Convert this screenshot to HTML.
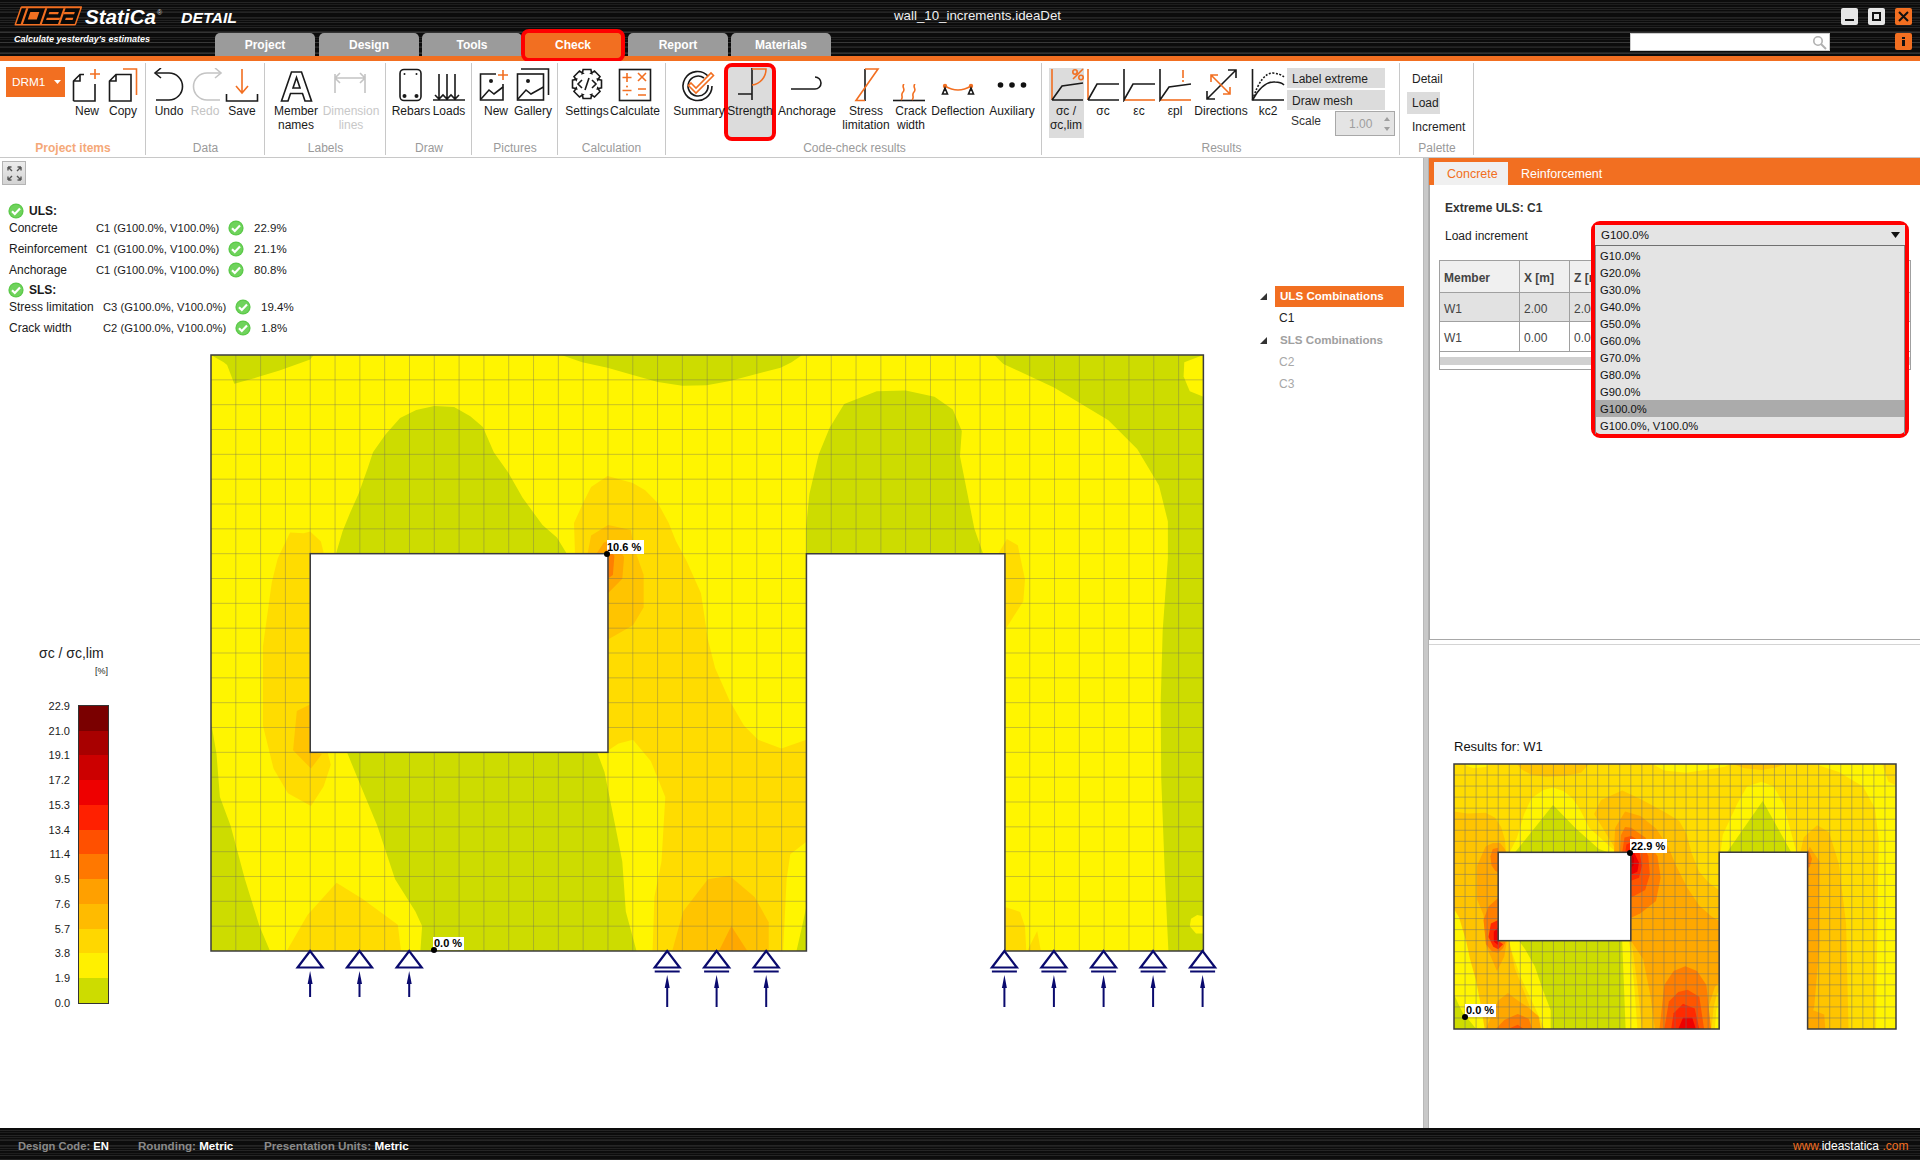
<!DOCTYPE html>
<html><head><meta charset="utf-8">
<style>
*{margin:0;padding:0;box-sizing:border-box}
html,body{width:1920px;height:1160px;overflow:hidden;background:#fff;font-family:"Liberation Sans",sans-serif;position:relative;color:#1e1e1e}
.abs{position:absolute}
.t{position:absolute;white-space:nowrap}
.dark{background-color:#0c0c0c;background-image:
 repeating-linear-gradient(180deg,rgba(255,255,255,0) 0px,rgba(255,255,255,0) 2px,rgba(255,255,255,0.10) 2px,rgba(255,255,255,0.10) 3px,rgba(255,255,255,0) 3px,rgba(255,255,255,0) 5px),
 repeating-linear-gradient(180deg,rgba(255,255,255,0) 0px,rgba(255,255,255,0) 4px,rgba(255,255,255,0.07) 4px,rgba(255,255,255,0.07) 5px,rgba(255,255,255,0) 5px,rgba(255,255,255,0) 7px),
 repeating-linear-gradient(180deg,rgba(255,255,255,0) 0px,rgba(255,255,255,0) 9px,rgba(255,255,255,0.09) 9px,rgba(255,255,255,0.09) 10px,rgba(255,255,255,0) 10px,rgba(255,255,255,0) 11px)}
.tab{position:absolute;top:33px;height:23px;background:#9b9b9b;border-radius:5px 5px 0 0;color:#fff;font-weight:bold;font-size:12px;text-align:center;line-height:24px}
.sep{position:absolute;top:63px;width:1px;height:92px;background:#c8c8c8}
.glab{position:absolute;top:141px;font-size:12px;color:#9a9a9a;text-align:center;white-space:nowrap;line-height:14px}
.bl{position:absolute;font-size:12px;color:#1a1a1a;text-align:center;white-space:nowrap;line-height:15px;transform:translateX(-50%)}
.ic{position:absolute}
.chk{position:absolute;width:15px;height:15px;border-radius:50%;background:radial-gradient(circle at 50% 40%,#7ddc5c,#4cbf3a)}
.row{position:absolute;font-size:12px;line-height:14px;white-space:nowrap;color:#1a1a1a}
.leg{position:absolute;font-size:11px;color:#1a1a1a;text-align:right;width:40px;line-height:12px}
</style></head><body>

<div class="abs dark" style="left:0;top:0;width:1920px;height:56px"></div>
<div class="abs" style="left:0;top:56px;width:1920px;height:5px;background:#f26f21"></div>
<svg class="abs" style="left:0;top:0" width="250" height="48" viewBox="0 0 250 48">
<g transform="translate(14.2,25.5) skewX(-18.9)">
<rect x="0" y="-19.3" width="61.6" height="19.3" rx="1.2" fill="#f26f21"/>
<rect x="1.6" y="-17.3" width="58.4" height="15.9" fill="#080808"/>
<rect x="6.0" y="-17.3" width="2.3" height="15.9" fill="#f26f21"/>
<rect x="25.0" y="-17.3" width="2.2" height="15.9" fill="#f26f21"/>
<rect x="43.3" y="-17.3" width="2.2" height="15.9" fill="#f26f21"/>
<rect x="11.5" y="-13.5" width="9.0" height="7.5" fill="#f26f21"/>
<rect x="30.5" y="-13.5" width="9.5" height="2.2" fill="#f26f21"/>
<rect x="30.0" y="-7.7" width="13.3" height="2.2" fill="#f26f21"/>
<rect x="45.5" y="-13.5" width="10.5" height="2.2" fill="#f26f21"/>
<rect x="49.0" y="-7.7" width="7.5" height="2.2" fill="#f26f21"/>
</g>
<text x="85" y="24" font-family="Liberation Sans" font-weight="bold" font-style="italic" font-size="20" fill="#fff" textLength="71" lengthAdjust="spacingAndGlyphs">StatiCa</text>
<text x="157" y="15" font-family="Liberation Sans" font-size="7" fill="#ccc">®</text>
<text x="181" y="23" font-family="Liberation Sans" font-weight="bold" font-style="italic" font-size="15" fill="#fff" textLength="56" lengthAdjust="spacingAndGlyphs">DETAIL</text>
<text x="14" y="42" font-family="Liberation Sans" font-weight="bold" font-style="italic" font-size="9" fill="#fff" textLength="136" lengthAdjust="spacingAndGlyphs">Calculate yesterday's estimates</text>
</svg>
<div class="t" style="left:894px;top:8px;font-size:13.3px;color:#f0f0f0;line-height:16px">wall_10_increments.ideaDet</div>
<div class="abs" style="left:1841px;top:8px;width:17px;height:17px;background:#e6e6e6;border-radius:2px"><div class="abs" style="left:4px;top:11px;width:9px;height:2px;background:#111"></div></div>
<div class="abs" style="left:1868px;top:8px;width:17px;height:17px;background:#e6e6e6;border-radius:2px"><div class="abs" style="left:4px;top:4px;width:9px;height:9px;border:2px solid #111"></div></div>
<div class="abs" style="left:1895px;top:8px;width:17px;height:17px;background:#f26f21;border-radius:2px"><svg class="abs" style="left:3px;top:3px" width="11" height="11"><path d="M1 1L10 10M10 1L1 10" stroke="#111" stroke-width="2"/></svg></div>
<div class="abs" style="left:1630px;top:33px;width:200px;height:18px;background:#fff;border:1px solid #ccc"><svg class="abs" style="left:181px;top:1px" width="16" height="16"><circle cx="6" cy="6" r="4.2" stroke="#b0b0b0" stroke-width="1.6" fill="none"/><path d="M9 9L14 14" stroke="#b0b0b0" stroke-width="2"/></svg></div>
<div class="abs" style="left:1895px;top:33px;width:17px;height:17px;background:#f26f21;border-radius:2px"><div class="abs" style="left:7px;top:4px;width:3px;height:2px;background:#111"></div><div class="abs" style="left:7px;top:7px;width:3px;height:6px;background:#111"></div></div>
<div class="tab" style="left:215px;width:100px">Project</div>
<div class="tab" style="left:319px;width:100px">Design</div>
<div class="tab" style="left:422px;width:100px">Tools</div>
<div class="tab" style="left:628px;width:100px">Report</div>
<div class="tab" style="left:731px;width:100px">Materials</div>
<div class="abs" style="left:521px;top:29px;width:104px;height:33px;border:4px solid #ff0000;border-radius:8px;background:#f26f21"></div>
<div class="tab" style="left:525px;width:96px;background:#f26f21;top:33px;height:25px;border-radius:5px">Check</div>
<div class="abs" style="left:0;top:61px;width:1920px;height:97px;background:#fff;border-bottom:1px solid #c8c8c8"></div>
<div class="sep" style="left:145px"></div>
<div class="sep" style="left:264px"></div>
<div class="sep" style="left:385px"></div>
<div class="sep" style="left:471px"></div>
<div class="sep" style="left:557px"></div>
<div class="sep" style="left:665px"></div>
<div class="sep" style="left:1041px"></div>
<div class="sep" style="left:1399px"></div>
<div class="sep" style="left:1473px"></div>
<div class="glab" style="left:13px;width:120px;color:#f5a878;font-weight:bold">Project items</div>
<div class="glab" style="left:145.5px;width:120px;color:#9a9a9a;font-weight:normal">Data</div>
<div class="glab" style="left:265.5px;width:120px;color:#9a9a9a;font-weight:normal">Labels</div>
<div class="glab" style="left:369px;width:120px;color:#9a9a9a;font-weight:normal">Draw</div>
<div class="glab" style="left:455px;width:120px;color:#9a9a9a;font-weight:normal">Pictures</div>
<div class="glab" style="left:551.5px;width:120px;color:#9a9a9a;font-weight:normal">Calculation</div>
<div class="glab" style="left:794.5px;width:120px;color:#9a9a9a;font-weight:normal">Code-check results</div>
<div class="glab" style="left:1161.5px;width:120px;color:#9a9a9a;font-weight:normal">Results</div>
<div class="glab" style="left:1377px;width:120px;color:#9a9a9a;font-weight:normal">Palette</div>
<div class="abs" style="left:6px;top:67px;width:59px;height:30px;background:#f26f21"><div class="t" style="left:6px;top:8px;font-size:11.8px;color:#fff;line-height:15px">DRM1</div><svg class="abs" style="left:48px;top:13px" width="7" height="5"><path d="M0 0H7L3.5 4Z" fill="#fff"/></svg></div>
<div class="abs" style="left:724px;top:63px;width:52px;height:78px;border:4px solid #ff0000;border-radius:8px;background:#dcdcdc"></div>
<div class="abs" style="left:1049px;top:68px;width:35px;height:70px;background:#dcdcdc"></div>
<div class="bl" style="left:87px;top:104px;color:#1a1a1a">New</div>
<div class="bl" style="left:123px;top:104px;color:#1a1a1a">Copy</div>
<div class="bl" style="left:169px;top:104px;color:#1a1a1a">Undo</div>
<div class="bl" style="left:205px;top:104px;color:#c4c4c4">Redo</div>
<div class="bl" style="left:242px;top:104px;color:#1a1a1a">Save</div>
<div class="bl" style="left:411px;top:104px;color:#1a1a1a">Rebars</div>
<div class="bl" style="left:449px;top:104px;color:#1a1a1a">Loads</div>
<div class="bl" style="left:496px;top:104px;color:#1a1a1a">New</div>
<div class="bl" style="left:533px;top:104px;color:#1a1a1a">Gallery</div>
<div class="bl" style="left:587px;top:104px;color:#1a1a1a">Settings</div>
<div class="bl" style="left:635px;top:104px;color:#1a1a1a">Calculate</div>
<div class="bl" style="left:699px;top:104px;color:#1a1a1a">Summary</div>
<div class="bl" style="left:750px;top:104px;color:#1a1a1a">Strength</div>
<div class="bl" style="left:807px;top:104px;color:#1a1a1a">Anchorage</div>
<div class="bl" style="left:958px;top:104px;color:#1a1a1a">Deflection</div>
<div class="bl" style="left:1012px;top:104px;color:#1a1a1a">Auxiliary</div>
<div class="bl" style="left:1103px;top:104px;color:#1a1a1a">σc</div>
<div class="bl" style="left:1139px;top:104px;color:#1a1a1a">εc</div>
<div class="bl" style="left:1175px;top:104px;color:#1a1a1a">εpl</div>
<div class="bl" style="left:1221px;top:104px;color:#1a1a1a">Directions</div>
<div class="bl" style="left:1268px;top:104px;color:#1a1a1a">kc2</div>
<div class="bl" style="left:296px;top:104px;color:#1a1a1a">Member</div>
<div class="bl" style="left:296px;top:118px;color:#1a1a1a">names</div>
<div class="bl" style="left:351px;top:104px;color:#c8c8c8">Dimension</div>
<div class="bl" style="left:351px;top:118px;color:#c8c8c8">lines</div>
<div class="bl" style="left:866px;top:104px;color:#1a1a1a">Stress</div>
<div class="bl" style="left:866px;top:118px;color:#1a1a1a">limitation</div>
<div class="bl" style="left:911px;top:104px;color:#1a1a1a">Crack</div>
<div class="bl" style="left:911px;top:118px;color:#1a1a1a">width</div>
<div class="bl" style="left:1066px;top:104px;color:#1a1a1a">σc /</div>
<div class="bl" style="left:1066px;top:118px;color:#1a1a1a">σc,lim</div>
<svg class="ic" style="left:72px;top:68px" width="32" height="34" viewBox="0 0 32 34"><path d="M1.5 33V13L8 6.5H12M1.5 13H8V6.5" stroke="#1a1a1a" stroke-width="1.6" fill="none"/><path d="M23 16V33H1.5" stroke="#1a1a1a" stroke-width="1.6" fill="none"/><path d="M23 1V11M18 6H28" stroke="#f26f21" stroke-width="1.6" fill="none"/></svg>
<svg class="ic" style="left:108px;top:68px" width="32" height="34" viewBox="0 0 32 34"><path d="M1.5 33V13L8 6.5H23V33Z M1.5 13H8V6.5" stroke="#1a1a1a" stroke-width="1.6" fill="none"/><path d="M15 1H28.5V27" stroke="#f26f21" stroke-width="1.6" fill="none"/></svg>
<svg class="ic" style="left:153px;top:68px" width="34" height="34" viewBox="0 0 34 34"><path d="M3 5H16A13 13 0 0 1 16 32H3" stroke="#1a1a1a" stroke-width="1.6" fill="none"/><path d="M8 0L2 5L8 10" stroke="#1a1a1a" stroke-width="1.6" fill="none"/></svg>
<svg class="ic" style="left:189px;top:68px" width="34" height="34" viewBox="0 0 34 34"><path d="M31 5H18A13 13 0 0 0 18 32H31" stroke="#c4c4c4" stroke-width="1.6" fill="none"/><path d="M26 0L32 5L26 10" stroke="#c4c4c4" stroke-width="1.6" fill="none"/></svg>
<svg class="ic" style="left:225px;top:68px" width="34" height="34" viewBox="0 0 34 34"><path d="M17 1V25M11 18L17 25L23 18" stroke="#f26f21" stroke-width="1.6" fill="none"/><path d="M1.5 26V33H32.5V26" stroke="#1a1a1a" stroke-width="1.6" fill="none"/></svg>
<svg class="ic" style="left:280px;top:70px" width="34" height="34" viewBox="0 0 34 34"><path d="M11.5 2H21.5L31.5 31H25L22.5 23.5H10.5L8 31H1.5Z M13 18H20L16.5 7.5Z" stroke="#1a1a1a" stroke-width="1.6" fill="none"/></svg>
<svg class="ic" style="left:333px;top:68px" width="34" height="34" viewBox="0 0 34 34"><path d="M2 6V25M32 6V25M2 10H32M7 5L2 10L7 15M27 5L32 10L27 15" stroke="#c4c4c4" stroke-width="1.6" fill="none"/></svg>
<svg class="ic" style="left:398px;top:68px" width="26" height="34" viewBox="0 0 26 34"><rect x="2" y="1.5" width="21" height="31" rx="4" stroke="#1a1a1a" stroke-width="1.6" fill="none"/><circle cx="6.5" cy="6" r="1" fill="#1a1a1a"/><circle cx="18.5" cy="6" r="1" fill="#1a1a1a"/><circle cx="6.5" cy="28" r="2" fill="#1a1a1a"/><circle cx="18.5" cy="28" r="2" fill="#1a1a1a"/></svg>
<svg class="ic" style="left:432px;top:68px" width="34" height="34" viewBox="0 0 34 34"><path d="M7 6V31M15 6V31M23 6V31M1 32H33M3 27L7 31L11 27L15 31L19 27L23 31L27 27" stroke="#1a1a1a" stroke-width="1.6" fill="none"/></svg>
<svg class="ic" style="left:479px;top:68px" width="34" height="34" viewBox="0 0 34 34"><path d="M24 16V32H1.5V6H17" stroke="#1a1a1a" stroke-width="1.6" fill="none"/><path d="M24 2V12M19 7H29" stroke="#f26f21" stroke-width="1.6" fill="none"/><circle cx="12" cy="13" r="2" fill="#1a1a1a"/><path d="M2 31L10 22L15 26L24 19" stroke="#1a1a1a" stroke-width="1.6" fill="none"/></svg>
<svg class="ic" style="left:516px;top:68px" width="34" height="34" viewBox="0 0 34 34"><rect x="1.5" y="6" width="26" height="26" stroke="#1a1a1a" stroke-width="1.6" fill="none"/><path d="M5 1H32.5V27" stroke="#1a1a1a" stroke-width="1.6" fill="none"/><circle cx="12" cy="13" r="2" fill="#1a1a1a"/><path d="M2 31L10 22L15 26L27.5 19" stroke="#1a1a1a" stroke-width="1.6" fill="none"/></svg>
<svg class="ic" style="left:571px;top:68px" width="32" height="34" viewBox="0 0 32 34"><path d="M30.5 12.1 L30.5 19.9 L26.5 20.7 L26.7 20.1 L29.0 23.5 L23.5 29.0 L20.1 26.7 L20.7 26.5 L19.9 30.5 L12.1 30.5 L11.3 26.5 L11.9 26.7 L8.5 29.0 L3.0 23.5 L5.3 20.1 L5.5 20.7 L1.5 19.9 L1.5 12.1 L5.5 11.3 L5.3 11.9 L3.0 8.5 L8.5 3.0 L11.9 5.3 L11.3 5.5 L12.1 1.5 L19.9 1.5 L20.7 5.5 L20.1 5.3 L23.5 3.0 L29.0 8.5 L26.7 11.9 L26.5 11.3Z" stroke="#1a1a1a" stroke-width="1.6" fill="none" stroke-width="1.4"/><path d="M11 12L7 16L11 20M21 12L25 16L21 20M18 10L14 22" stroke="#1a1a1a" stroke-width="1.6" fill="none" stroke-width="1.4"/></svg>
<svg class="ic" style="left:618px;top:68px" width="34" height="34" viewBox="0 0 34 34"><rect x="1.5" y="1.5" width="31" height="31" stroke="#1a1a1a" stroke-width="1.6" fill="none"/><path d="M9 5V14M4.5 9.5H13.5M20 5L28 13M28 5L20 13M4.5 22.5H13.5M20 21H28M20 27H28" stroke="#f26f21" stroke-width="1.6" fill="none"/><circle cx="9" cy="18.5" r="1" fill="#f26f21"/><circle cx="9" cy="26.5" r="1" fill="#f26f21"/></svg>
<svg class="ic" style="left:682px;top:68px" width="34" height="34" viewBox="0 0 34 34"><path d="M26 8A14.5 14.5 0 1 0 30 18" stroke="#1a1a1a" stroke-width="1.6" fill="none" stroke-width="1.5"/><path d="M22 10A10 10 0 1 0 26 17" stroke="#1a1a1a" stroke-width="1.6" fill="none" stroke-width="1.5"/><path d="M9 15L14 20L29 5L31.5 7.5L14 25L6.5 17.5Z" stroke="#f26f21" stroke-width="1.6" fill="none" stroke-width="1.4"/></svg>
<svg class="ic" style="left:738px;top:68px" width="34" height="34" viewBox="0 0 34 34"><path d="M14 0V32M0 26H14" stroke="#1a1a1a" stroke-width="1.6" fill="none"/><path d="M14 1H28A16 16 0 0 1 14 17" stroke="#f26f21" stroke-width="1.6" fill="none"/></svg>
<svg class="ic" style="left:790px;top:76px" width="34" height="16" viewBox="0 0 34 16"><path d="M1 13H25A6 6 0 0 0 25 1" stroke="#1a1a1a" stroke-width="1.6" fill="none"/></svg>
<svg class="ic" style="left:854px;top:68px" width="28" height="34" viewBox="0 0 28 34"><path d="M11 1V33" stroke="#1a1a1a" stroke-width="1.6" fill="none"/><path d="M11 1H24L2 32.5H11" stroke="#f26f21" stroke-width="1.6" fill="none"/></svg>
<svg class="ic" style="left:893px;top:84px" width="34" height="18" viewBox="0 0 34 18"><path d="M0 16.5H32" stroke="#1a1a1a" stroke-width="1.6" fill="none"/><path d="M11 0C8 3 13 5 10 8S11 13 8 16M22 0C19 3 24 5 21 8S22 13 19 16" stroke="#f26f21" stroke-width="1.6" fill="none" stroke-width="1.3"/></svg>
<svg class="ic" style="left:940px;top:82px" width="36" height="16" viewBox="0 0 36 16"><path d="M5 4Q18 12 31 4" stroke="#f26f21" stroke-width="1.6" fill="none"/><circle cx="5" cy="4" r="2.2" fill="#f26f21"/><circle cx="31" cy="4" r="2.2" fill="#f26f21"/><path d="M5 6L2.5 12H7.5Z M31 6L28.5 12H33.5Z" stroke="#1a1a1a" stroke-width="1.6" fill="none" stroke-width="1.3"/></svg>
<svg class="ic" style="left:995px;top:80px" width="36" height="10" viewBox="0 0 36 10"><circle cx="5.5" cy="5" r="2.8" fill="#111"/><circle cx="17" cy="5" r="2.8" fill="#111"/><circle cx="28.5" cy="5" r="2.8" fill="#111"/></svg>
<svg class="ic" style="left:1050px;top:68px" width="34" height="34" viewBox="0 0 34 34"><path d="M2 1V32" stroke="#f26f21" stroke-width="1.6" fill="none"/><path d="M2 32H33M2 32L12 18L33 15" stroke="#1a1a1a" stroke-width="1.6" fill="none"/><path d="M23 11L33 1" stroke="#f26f21" stroke-width="1.6" fill="none" stroke-width="1.5"/><circle cx="25" cy="4" r="2.2" stroke="#f26f21" stroke-width="1.6" fill="none" stroke-width="1.4"/><circle cx="31" cy="9.5" r="2.2" stroke="#f26f21" stroke-width="1.6" fill="none" stroke-width="1.4"/></svg>
<svg class="ic" style="left:1086px;top:68px" width="34" height="34" viewBox="0 0 34 34"><path d="M2 1V32" stroke="#f26f21" stroke-width="1.6" fill="none"/><path d="M2 32H33M2 32L11 16H33" stroke="#1a1a1a" stroke-width="1.6" fill="none"/></svg>
<svg class="ic" style="left:1122px;top:68px" width="34" height="34" viewBox="0 0 34 34"><path d="M2 32H33" stroke="#f26f21" stroke-width="1.6" fill="none"/><path d="M2 1V32L11 16H33" stroke="#1a1a1a" stroke-width="1.6" fill="none"/></svg>
<svg class="ic" style="left:1158px;top:68px" width="34" height="34" viewBox="0 0 34 34"><path d="M2 32H33" stroke="#f26f21" stroke-width="1.6" fill="none"/><path d="M2 1V32L11 19L33 16" stroke="#1a1a1a" stroke-width="1.6" fill="none"/><path d="M25 2V10M25 12V14" stroke="#f26f21" stroke-width="1.6" fill="none"/></svg>
<svg class="ic" style="left:1204px;top:68px" width="34" height="34" viewBox="0 0 34 34"><path d="M3 31L32 2M24 2H32V10M3 23V31H11" stroke="#1a1a1a" stroke-width="1.6" fill="none"/><path d="M7 7L26 26M7 14V7H14M19 26H26V19" stroke="#f26f21" stroke-width="1.6" fill="none"/></svg>
<svg class="ic" style="left:1251px;top:68px" width="34" height="34" viewBox="0 0 34 34"><path d="M1.5 1V32H33" stroke="#1a1a1a" stroke-width="1.6" fill="none"/><path d="M1.5 32Q12 13 24 14Q30 14 33 17" stroke="#1a1a1a" stroke-width="1.6" fill="none"/><path d="M1.5 32Q10 5 22 5Q30 6 33 9" stroke="#1a1a1a" stroke-width="1.6" fill="none" stroke-dasharray="2 1.5"/></svg>
<div class="abs" style="left:1287px;top:68px;width:98px;height:20px;background:#dcdcdc"></div>
<div class="abs" style="left:1287px;top:90px;width:98px;height:20px;background:#dcdcdc"></div>
<div class="t" style="left:1292px;top:72px;font-size:12px;line-height:14px">Label extreme</div>
<div class="t" style="left:1292px;top:94px;font-size:12px;line-height:14px">Draw mesh</div>
<div class="t" style="left:1291px;top:114px;font-size:12px;line-height:14px;color:#333">Scale</div>
<div class="abs" style="left:1335px;top:111px;width:60px;height:25px;background:#e4e4e4;border:1px solid #a8a8a8"><div class="t" style="left:13px;top:5px;font-size:12px;color:#9e9e9e;line-height:14px">1.00</div><svg class="abs" style="left:47px;top:4px" width="8" height="16"><path d="M1 5H7L4 1Z M1 11H7L4 15Z" fill="#9e9e9e"/></svg></div>
<div class="t" style="left:1412px;top:72px;font-size:12px;line-height:14px">Detail</div>
<div class="abs" style="left:1407px;top:92px;width:33px;height:22px;background:#dcdcdc"></div>
<div class="t" style="left:1412px;top:96px;font-size:12px;line-height:14px">Load</div>
<div class="t" style="left:1412px;top:120px;font-size:12px;line-height:14px">Increment</div>
<div class="abs" style="left:2px;top:161px;width:24px;height:24px;border:1px solid #b4b4b4;background:linear-gradient(#ececec,#d4d4d4)"><svg class="abs" style="left:3px;top:3px" width="17" height="17"><path d="M2 2L6 6M2 2V5.5M2 2H5.5M15 2L11 6M15 2V5.5M15 2H11.5M2 15L6 11M2 15V11.5M2 15H5.5M15 15L11 11M15 15V11.5M15 15H11.5" stroke="#555" stroke-width="1.4" fill="none"/></svg></div>
<svg class="abs" style="left:8px;top:203px" width="16" height="16" viewBox="0 0 16 16"><circle cx="8" cy="8" r="7.6" fill="#5cc94a"/><circle cx="8" cy="8" r="6.3" fill="#6fd35c"/><path d="M4 8.2L6.8 11L12 5.6" stroke="#fff" stroke-width="2.2" fill="none"/></svg>
<div class="row" style="left:29px;top:204px;font-weight:bold">ULS:</div>
<svg class="abs" style="left:8px;top:282px" width="16" height="16" viewBox="0 0 16 16"><circle cx="8" cy="8" r="7.6" fill="#5cc94a"/><circle cx="8" cy="8" r="6.3" fill="#6fd35c"/><path d="M4 8.2L6.8 11L12 5.6" stroke="#fff" stroke-width="2.2" fill="none"/></svg>
<div class="row" style="left:29px;top:283px;font-weight:bold">SLS:</div>
<div class="row" style="left:9px;top:221px">Concrete</div>
<div class="row" style="left:96px;top:221px;font-size:11.2px">C1 (G100.0%, V100.0%)</div>
<svg class="abs" style="left:228px;top:220px" width="16" height="16" viewBox="0 0 16 16"><circle cx="8" cy="8" r="7.6" fill="#5cc94a"/><circle cx="8" cy="8" r="6.3" fill="#6fd35c"/><path d="M4 8.2L6.8 11L12 5.6" stroke="#fff" stroke-width="2.2" fill="none"/></svg>
<div class="row" style="left:254px;top:221px;font-size:11.5px">22.9%</div>
<div class="row" style="left:9px;top:242px">Reinforcement</div>
<div class="row" style="left:96px;top:242px;font-size:11.2px">C1 (G100.0%, V100.0%)</div>
<svg class="abs" style="left:228px;top:241px" width="16" height="16" viewBox="0 0 16 16"><circle cx="8" cy="8" r="7.6" fill="#5cc94a"/><circle cx="8" cy="8" r="6.3" fill="#6fd35c"/><path d="M4 8.2L6.8 11L12 5.6" stroke="#fff" stroke-width="2.2" fill="none"/></svg>
<div class="row" style="left:254px;top:242px;font-size:11.5px">21.1%</div>
<div class="row" style="left:9px;top:263px">Anchorage</div>
<div class="row" style="left:96px;top:263px;font-size:11.2px">C1 (G100.0%, V100.0%)</div>
<svg class="abs" style="left:228px;top:262px" width="16" height="16" viewBox="0 0 16 16"><circle cx="8" cy="8" r="7.6" fill="#5cc94a"/><circle cx="8" cy="8" r="6.3" fill="#6fd35c"/><path d="M4 8.2L6.8 11L12 5.6" stroke="#fff" stroke-width="2.2" fill="none"/></svg>
<div class="row" style="left:254px;top:263px;font-size:11.5px">80.8%</div>
<div class="row" style="left:9px;top:300px">Stress limitation</div>
<div class="row" style="left:103px;top:300px;font-size:11.2px">C3 (G100.0%, V100.0%)</div>
<svg class="abs" style="left:235px;top:299px" width="16" height="16" viewBox="0 0 16 16"><circle cx="8" cy="8" r="7.6" fill="#5cc94a"/><circle cx="8" cy="8" r="6.3" fill="#6fd35c"/><path d="M4 8.2L6.8 11L12 5.6" stroke="#fff" stroke-width="2.2" fill="none"/></svg>
<div class="row" style="left:261px;top:300px;font-size:11.5px">19.4%</div>
<div class="row" style="left:9px;top:321px">Crack width</div>
<div class="row" style="left:103px;top:321px;font-size:11.2px">C2 (G100.0%, V100.0%)</div>
<svg class="abs" style="left:235px;top:320px" width="16" height="16" viewBox="0 0 16 16"><circle cx="8" cy="8" r="7.6" fill="#5cc94a"/><circle cx="8" cy="8" r="6.3" fill="#6fd35c"/><path d="M4 8.2L6.8 11L12 5.6" stroke="#fff" stroke-width="2.2" fill="none"/></svg>
<div class="row" style="left:261px;top:321px;font-size:11.5px">1.8%</div>
<div class="t" style="left:39px;top:645px;font-size:14px;line-height:16px;color:#222">σc / σc,lim</div>
<div class="t" style="left:95px;top:666px;font-size:9px;line-height:10px;color:#222">[%]</div>
<div class="abs" style="left:78px;top:705px;width:31px;height:299px;border:1px solid #333"></div>
<div class="abs" style="left:79px;top:706.0px;width:29px;height:25.2px;background:#7a0000"></div>
<div class="abs" style="left:79px;top:730.7px;width:29px;height:25.2px;background:#a80000"></div>
<div class="abs" style="left:79px;top:755.4px;width:29px;height:25.2px;background:#cc0000"></div>
<div class="abs" style="left:79px;top:780.2px;width:29px;height:25.2px;background:#ee0000"></div>
<div class="abs" style="left:79px;top:804.9px;width:29px;height:25.2px;background:#ff2000"></div>
<div class="abs" style="left:79px;top:829.6px;width:29px;height:25.2px;background:#ff5000"></div>
<div class="abs" style="left:79px;top:854.3px;width:29px;height:25.2px;background:#ff7800"></div>
<div class="abs" style="left:79px;top:879.0px;width:29px;height:25.2px;background:#ffa000"></div>
<div class="abs" style="left:79px;top:903.8px;width:29px;height:25.2px;background:#ffbb00"></div>
<div class="abs" style="left:79px;top:928.5px;width:29px;height:25.2px;background:#ffd700"></div>
<div class="abs" style="left:79px;top:953.2px;width:29px;height:25.2px;background:#fff000"></div>
<div class="abs" style="left:79px;top:977.9px;width:29px;height:25.2px;background:#cddc00"></div>
<div class="leg" style="left:30px;top:700.0px">22.9</div>
<div class="leg" style="left:30px;top:724.7px">21.0</div>
<div class="leg" style="left:30px;top:749.4px">19.1</div>
<div class="leg" style="left:30px;top:774.2px">17.2</div>
<div class="leg" style="left:30px;top:798.9px">15.3</div>
<div class="leg" style="left:30px;top:823.6px">13.4</div>
<div class="leg" style="left:30px;top:848.3px">11.4</div>
<div class="leg" style="left:30px;top:873.0px">9.5</div>
<div class="leg" style="left:30px;top:897.8px">7.6</div>
<div class="leg" style="left:30px;top:922.5px">5.7</div>
<div class="leg" style="left:30px;top:947.2px">3.8</div>
<div class="leg" style="left:30px;top:971.9px">1.9</div>
<div class="leg" style="left:30px;top:996.6px">0.0</div>
<svg class="abs" style="left:207.8px;top:352px" width="998.4" height="602" viewBox="-3 -3 998.4 602">
<polygon points="0.0,0.0 992.4,0.0 992.4,596.0 0.0,596.0" fill="#fff500"/>
<polygon points="0.0,0.0 12.7,7.2 16.1,9.9 23.3,28.8 48.6,21.6 68.5,15.4 99.2,4.5 102.7,0.0" fill="#cddc00"/>
<polygon points="350.3,0.0 371.2,7.2 396.5,12.7 421.8,19.9 446.8,27.1 471.4,30.8 495.7,30.3 519.0,26.1 545.3,18.9 569.6,12.7 580.6,7.2 591.2,0.0" fill="#cddc00"/>
<polygon points="125.0,198.7 131.5,176.6 138.7,158.7 147.6,138.8 156.6,113.5 162.0,97.3 174.7,79.2 189.1,63.1 205.2,54.9 223.3,50.9 243.1,52.1 259.3,61.3 271.9,72.0 282.8,97.3 297.2,117.5 311.6,142.8 331.5,169.9 345.9,182.5 355.8,198.7" fill="#cddc00"/>
<polygon points="594.9,198.7 594.9,173.8 598.4,139.1 600.4,130.4 607.8,99.3 618.8,72.5 633.2,48.9 665.7,36.3 694.7,35.5 723.5,41.7 741.8,54.4 750.8,76.0 749.0,101.3 756.2,137.6 763.4,173.8 772.3,199.2" fill="#cddc00"/>
<polygon points="783.3,0.0 792.4,8.9 843.0,32.5 897.4,65.3 926.2,94.1 948.0,130.4 956.9,166.6 956.9,202.9 951.7,275.2 949.7,347.7 950.2,422.2 953.9,521.5 957.4,596.0 992.4,596.0 992.4,0.0" fill="#cddc00"/>
<polygon points="973.3,7.2 992.4,0.0 992.4,41.7 978.8,36.3 972.6,21.6" fill="#fff500"/>
<polygon points="980.0,563.7 986.2,560.0 992.4,561.2 992.4,578.6 985.0,578.6 978.8,571.2" fill="#fff500"/>
<polygon points="0.0,366.8 5.5,399.1 8.9,442.0 19.6,470.8 34.0,524.5 48.4,570.9 59.0,596.0 0.0,596.0" fill="#cddc00"/>
<polygon points="136.0,397.3 148.4,427.6 166.2,470.6 184.1,524.2 204.4,556.5 211.1,570.9 209.4,596.0 425.5,596.0 414.8,556.5 411.3,506.4 404.2,470.6 393.5,417.0 385.5,395.6" fill="#cddc00"/>
<polygon points="585.5,596.0 595.4,596.0 595.4,551.3 591.7,568.7" fill="#cddc00"/>
<polygon points="112.6,197.4 109.9,186.5 99.2,176.6 92.8,178.3 79.1,177.6 66.7,203.6 60.8,227.2 51.9,291.8 51.9,370.5 62.5,413.5 76.9,438.3 100.0,451.0 112.6,431.4 119.8,409.8 116.1,395.3 111.6,397.3 111.6,198.7" fill="#ffdc00"/>
<polygon points="364.0,198.7 363.0,167.9 372.9,146.3 380.1,131.9 396.5,120.9 421.8,128.1 434.2,135.3 446.8,148.0 457.7,167.9 464.9,186.0 475.6,205.9 490.0,238.2 496.9,284.6 504.1,313.1 518.5,345.4 532.9,370.5 547.1,384.7 570.4,393.6 595.4,384.7 595.4,486.7 579.3,499.2 575.6,524.2 572.1,596.0 441.6,596.0 443.4,542.1 450.5,506.4 454.3,442.0 439.9,406.3 422.0,384.7 407.6,388.4 397.0,395.6 397.0,198.7" fill="#ffdc00"/>
<polygon points="75.7,596.0 96.5,560.0 125.5,527.7 151.3,543.8 186.8,569.7 190.0,596.0" fill="#ffdc00"/>
<polygon points="787.0,199.2 795.9,184.0 806.8,190.2 814.0,224.5 812.3,246.3 793.9,275.2" fill="#ffdc00"/>
<polygon points="793.9,552.0 801.9,554.5 809.1,557.0 814.0,571.4 815.3,596.0 793.9,596.0" fill="#ffdc00"/>
<polygon points="816.2,596.0 826.2,576.1 829.9,596.0" fill="#ffdc00"/>
<polygon points="100.0,348.9 85.8,356.1 82.1,395.3 100.0,413.5 110.9,399.1 100.0,397.3" fill="#ffc400"/>
<polygon points="376.6,198.7 380.1,180.5 397.2,169.9 419.8,175.1 421.8,186.0 425.2,198.7 432.7,220.0 432.7,252.3 422.0,270.2 397.0,284.6 397.0,198.7" fill="#ffc400"/>
<polygon points="461.2,596.0 472.1,556.5 496.9,524.2 518.5,520.8 543.6,542.1 557.7,567.2 557.7,596.0" fill="#ffc400"/>
<polygon points="385.5,198.7 392.7,187.7 397.0,186.0 406.9,191.2 413.1,202.1 411.3,223.7 397.0,238.2" fill="#ffa800"/>
<polygon points="507.9,596.0 520.3,570.9 536.4,596.0" fill="#ffa800"/>
<polygon points="393.2,198.7 397.0,192.5 403.4,201.1 401.9,220.0 397.0,223.5" fill="#ff7f00"/>
<path d="M24.81 0V596M49.62 0V596M74.43 0V596M99.24 0V596M124.05 0V596M148.86 0V596M173.67 0V596M198.48 0V596M223.29 0V596M248.10 0V596M272.91 0V596M297.72 0V596M322.53 0V596M347.34 0V596M372.15 0V596M396.96 0V596M421.77 0V596M446.58 0V596M471.39 0V596M496.20 0V596M521.01 0V596M545.82 0V596M570.63 0V596M595.44 0V596M620.25 0V596M645.06 0V596M669.87 0V596M694.68 0V596M719.49 0V596M744.30 0V596M769.11 0V596M793.92 0V596M818.73 0V596M843.54 0V596M868.35 0V596M893.16 0V596M917.97 0V596M942.78 0V596M967.59 0V596M0 24.83H992.4M0 49.67H992.4M0 74.50H992.4M0 99.33H992.4M0 124.17H992.4M0 149.00H992.4M0 173.83H992.4M0 198.67H992.4M0 223.50H992.4M0 248.33H992.4M0 273.17H992.4M0 298.00H992.4M0 322.83H992.4M0 347.67H992.4M0 372.50H992.4M0 397.33H992.4M0 422.17H992.4M0 447.00H992.4M0 471.83H992.4M0 496.67H992.4M0 521.50H992.4M0 546.33H992.4M0 571.17H992.4" stroke="rgba(100,100,100,0.36)" stroke-width="1.0" fill="none"/>
<rect x="99.24" y="198.67" width="297.72" height="198.67" fill="#fff" stroke="#3c3c3c" stroke-width="1.5"/>
<rect x="595.44" y="198.67" width="198.48" height="400.33" fill="#fff"/>
<path d="M0 0H992.4V596H793.92V198.67H595.44V596H0Z" fill="none" stroke="#3c3c3c" stroke-width="1.5"/>
</svg>
<svg class="abs" style="left:0;top:0" width="1420" height="1100">
<path d="M310.1 951L297.6 967.5H322.6Z" stroke="#0a0a6e" stroke-width="2.2" fill="none" stroke-linejoin="miter"/><path d="M310.1 981V997" stroke="#0a0a6e" stroke-width="2"/><path d="M310.1 971L307.6 984H312.6Z" fill="#0a0a6e"/>
<path d="M359.5 951L347.0 967.5H372.0Z" stroke="#0a0a6e" stroke-width="2.2" fill="none" stroke-linejoin="miter"/><path d="M359.5 981V997" stroke="#0a0a6e" stroke-width="2"/><path d="M359.5 971L357.0 984H362.0Z" fill="#0a0a6e"/>
<path d="M409.2 951L396.7 967.5H421.7Z" stroke="#0a0a6e" stroke-width="2.2" fill="none" stroke-linejoin="miter"/><path d="M409.2 981V997" stroke="#0a0a6e" stroke-width="2"/><path d="M409.2 971L406.7 984H411.7Z" fill="#0a0a6e"/>
<path d="M667.2 951L654.7 967.5H679.7Z" stroke="#0a0a6e" stroke-width="2.2" fill="none" stroke-linejoin="miter"/><path d="M654.7 971.5H679.7" stroke="#0a0a6e" stroke-width="2"/><path d="M667.2 985V1007" stroke="#0a0a6e" stroke-width="2"/><path d="M667.2 975L664.7 988H669.7Z" fill="#0a0a6e"/>
<path d="M716.6 951L704.1 967.5H729.1Z" stroke="#0a0a6e" stroke-width="2.2" fill="none" stroke-linejoin="miter"/><path d="M704.1 971.5H729.1" stroke="#0a0a6e" stroke-width="2"/><path d="M716.6 985V1007" stroke="#0a0a6e" stroke-width="2"/><path d="M716.6 975L714.1 988H719.1Z" fill="#0a0a6e"/>
<path d="M766.2 951L753.7 967.5H778.7Z" stroke="#0a0a6e" stroke-width="2.2" fill="none" stroke-linejoin="miter"/><path d="M753.7 971.5H778.7" stroke="#0a0a6e" stroke-width="2"/><path d="M766.2 985V1007" stroke="#0a0a6e" stroke-width="2"/><path d="M766.2 975L763.7 988H768.7Z" fill="#0a0a6e"/>
<path d="M1004.4 951L991.9 967.5H1016.9Z" stroke="#0a0a6e" stroke-width="2.2" fill="none" stroke-linejoin="miter"/><path d="M991.9 971.5H1016.9" stroke="#0a0a6e" stroke-width="2"/><path d="M1004.4 985V1007" stroke="#0a0a6e" stroke-width="2"/><path d="M1004.4 975L1001.9 988H1006.9Z" fill="#0a0a6e"/>
<path d="M1053.9 951L1041.4 967.5H1066.4Z" stroke="#0a0a6e" stroke-width="2.2" fill="none" stroke-linejoin="miter"/><path d="M1041.4 971.5H1066.4" stroke="#0a0a6e" stroke-width="2"/><path d="M1053.9 985V1007" stroke="#0a0a6e" stroke-width="2"/><path d="M1053.9 975L1051.4 988H1056.4Z" fill="#0a0a6e"/>
<path d="M1103.6 951L1091.1 967.5H1116.1Z" stroke="#0a0a6e" stroke-width="2.2" fill="none" stroke-linejoin="miter"/><path d="M1091.1 971.5H1116.1" stroke="#0a0a6e" stroke-width="2"/><path d="M1103.6 985V1007" stroke="#0a0a6e" stroke-width="2"/><path d="M1103.6 975L1101.1 988H1106.1Z" fill="#0a0a6e"/>
<path d="M1153.1 951L1140.6 967.5H1165.6Z" stroke="#0a0a6e" stroke-width="2.2" fill="none" stroke-linejoin="miter"/><path d="M1140.6 971.5H1165.6" stroke="#0a0a6e" stroke-width="2"/><path d="M1153.1 985V1007" stroke="#0a0a6e" stroke-width="2"/><path d="M1153.1 975L1150.6 988H1155.6Z" fill="#0a0a6e"/>
<path d="M1202.6 951L1190.1 967.5H1215.1Z" stroke="#0a0a6e" stroke-width="2.2" fill="none" stroke-linejoin="miter"/><path d="M1190.1 971.5H1215.1" stroke="#0a0a6e" stroke-width="2"/><path d="M1202.6 985V1007" stroke="#0a0a6e" stroke-width="2"/><path d="M1202.6 975L1200.1 988H1205.1Z" fill="#0a0a6e"/>
</svg>
<div class="abs" style="left:433px;top:937px;width:31px;height:13px;background:#fff"></div><div class="t" style="left:434px;top:937px;font-size:11px;font-weight:bold;line-height:13px;color:#000">0.0 %</div><div class="abs" style="left:431px;top:947px;width:6px;height:6px;border-radius:50%;background:#000"></div>
<div class="abs" style="left:607px;top:540px;width:37px;height:14px;background:#fff"></div><div class="t" style="left:607px;top:540px;font-size:11px;font-weight:bold;line-height:14px;color:#000">10.6 %</div><div class="abs" style="left:604px;top:551px;width:6px;height:6px;border-radius:50%;background:#000"></div>
<svg class="abs" style="left:1260px;top:293px" width="8" height="8"><path d="M7 0V7H0Z" fill="#333"/></svg>
<div class="abs" style="left:1275px;top:286px;width:129px;height:21px;background:#f26f21"></div>
<div class="t" style="left:1280px;top:289px;font-size:11.6px;font-weight:bold;color:#fff;line-height:14px">ULS Combinations</div>
<div class="t" style="left:1279px;top:311px;font-size:12px;line-height:14px">C1</div>
<svg class="abs" style="left:1260px;top:337px" width="8" height="8"><path d="M7 0V7H0Z" fill="#333"/></svg>
<div class="t" style="left:1280px;top:333px;font-size:11.6px;font-weight:bold;color:#a0a0a0;line-height:14px">SLS Combinations</div>
<div class="t" style="left:1279px;top:355px;font-size:12px;line-height:14px;color:#a8a8a8">C2</div>
<div class="t" style="left:1279px;top:377px;font-size:12px;line-height:14px;color:#a8a8a8">C3</div>
<div class="abs" style="left:1423px;top:158px;width:6px;height:970px;background:#c8c8c8;border-left:1px solid #b8b8b8;border-right:1px solid #b0b0b0"></div>
<div class="abs" style="left:1429px;top:158px;width:491px;height:27px;background:#f26f21"></div>
<div class="abs" style="left:1434px;top:162px;width:74px;height:23px;background:#f0f0f0"></div>
<div class="t" style="left:1447px;top:167px;font-size:12.5px;color:#f26f21;line-height:15px">Concrete</div>
<div class="t" style="left:1521px;top:167px;font-size:12.5px;color:#fff;line-height:15px">Reinforcement</div>
<div class="abs" style="left:1429px;top:185px;width:1px;height:455px;background:#a8a8a8"></div>
<div class="abs" style="left:1429px;top:639px;width:491px;height:1px;background:#a8a8a8"></div>
<div class="abs" style="left:1429px;top:644px;width:491px;height:1px;background:#d4d4d4"></div>
<div class="t" style="left:1445px;top:201px;font-size:12px;font-weight:bold;color:#333;line-height:14px">Extreme ULS: C1</div>
<div class="t" style="left:1445px;top:229px;font-size:12px;color:#222;line-height:14px">Load increment</div>
<div class="abs" style="left:1439px;top:260px;width:472px;height:110px;border:1px solid #a0a0a0;background:#fff"></div>
<div class="abs" style="left:1440px;top:261px;width:470px;height:32px;background:#f0f0f0;border-bottom:1px solid #a0a0a0"></div>
<div class="abs" style="left:1440px;top:293px;width:470px;height:29px;background:#e2e2e2;border-bottom:1px solid #a0a0a0"></div>
<div class="abs" style="left:1440px;top:322px;width:470px;height:30px;background:#fff;border-bottom:1px solid #a0a0a0"></div>
<div class="abs" style="left:1440px;top:357px;width:470px;height:8px;background:#d0d0d0"></div>
<div class="abs" style="left:1519px;top:261px;width:1px;height:91px;background:#a0a0a0"></div>
<div class="abs" style="left:1569px;top:261px;width:1px;height:91px;background:#a0a0a0"></div>
<div class="t" style="left:1444px;top:271px;font-size:12px;font-weight:bold;color:#444;line-height:14px">Member</div>
<div class="t" style="left:1524px;top:271px;font-size:12px;font-weight:bold;color:#444;line-height:14px">X [m]</div>
<div class="t" style="left:1574px;top:271px;font-size:12px;font-weight:bold;color:#444;line-height:14px">Z [m]</div>
<div class="t" style="left:1444px;top:302px;font-size:12px;color:#444;line-height:14px">W1</div>
<div class="t" style="left:1524px;top:302px;font-size:12px;color:#444;line-height:14px">2.00</div>
<div class="t" style="left:1574px;top:302px;font-size:12px;color:#444;line-height:14px">2.00</div>
<div class="t" style="left:1444px;top:331px;font-size:12px;color:#444;line-height:14px">W1</div>
<div class="t" style="left:1524px;top:331px;font-size:12px;color:#444;line-height:14px">0.00</div>
<div class="t" style="left:1574px;top:331px;font-size:12px;color:#444;line-height:14px">0.00</div>
<div class="abs" style="left:1591px;top:221px;width:318px;height:217px;border:4px solid #ff0000;border-radius:9px;background:#e4e4e4"></div>
<div class="abs" style="left:1595px;top:225px;width:310px;height:21px;background:#e4e4e4;border-bottom:1px solid #707070"></div>
<div class="t" style="left:1601px;top:228px;font-size:11.5px;color:#111;line-height:14px">G100.0%</div>
<svg class="abs" style="left:1891px;top:232px" width="10" height="7"><path d="M0 0H9L4.5 6Z" fill="#111"/></svg>
<div class="abs" style="left:1595px;top:246px;width:1px;height:188px;background:#8a8a8a"></div><div class="abs" style="left:1904px;top:246px;width:1px;height:188px;background:#8a8a8a"></div>
<div class="abs" style="left:1596px;top:400px;width:308px;height:17px;background:#ababab"></div>
<div class="t" style="left:1600px;top:249.0px;font-size:11.2px;color:#111;line-height:14px">G10.0%</div>
<div class="t" style="left:1600px;top:265.9px;font-size:11.2px;color:#111;line-height:14px">G20.0%</div>
<div class="t" style="left:1600px;top:282.9px;font-size:11.2px;color:#111;line-height:14px">G30.0%</div>
<div class="t" style="left:1600px;top:299.9px;font-size:11.2px;color:#111;line-height:14px">G40.0%</div>
<div class="t" style="left:1600px;top:316.8px;font-size:11.2px;color:#111;line-height:14px">G50.0%</div>
<div class="t" style="left:1600px;top:333.8px;font-size:11.2px;color:#111;line-height:14px">G60.0%</div>
<div class="t" style="left:1600px;top:350.7px;font-size:11.2px;color:#111;line-height:14px">G70.0%</div>
<div class="t" style="left:1600px;top:367.6px;font-size:11.2px;color:#111;line-height:14px">G80.0%</div>
<div class="t" style="left:1600px;top:384.6px;font-size:11.2px;color:#111;line-height:14px">G90.0%</div>
<div class="t" style="left:1600px;top:401.5px;font-size:11.2px;color:#111;line-height:14px">G100.0%</div>
<div class="t" style="left:1600px;top:418.5px;font-size:11.2px;color:#111;line-height:14px">G100.0%, V100.0%</div>
<div class="t" style="left:1454px;top:739px;font-size:13px;color:#111;line-height:15px">Results for: W1</div>
<svg class="abs" style="left:1451px;top:761px" width="448" height="271" viewBox="-3 -3 448 271">
<polygon points="0.0,0.0 442.0,0.0 442.0,265.0 0.0,265.0" fill="#ffdc00"/>
<polygon points="62.9,0.0 67.7,5.4 77.4,10.8 91.8,12.7 110.5,12.1 127.1,8.8 134.8,0.0" fill="#ffc400"/>
<polygon points="278.6,0.0 290.6,4.3 307.5,6.1 322.0,3.6 331.7,0.0" fill="#ffc400"/>
<polygon points="0.0,47.6 13.5,49.5 31.6,48.8 41.2,53.7 47.2,63.3 50.8,75.3 52.0,88.3 55.2,176.7 60.8,204.3 71.8,231.9 84.0,265.0 0.0,265.0" fill="#ffc400"/>
<polygon points="140.1,49.9 147.1,35.9 168.2,26.5 186.5,35.1 209.6,47.5 225.1,56.8 232.8,70.6 237.5,89.1 245.2,107.7 254.5,118.4 265.2,126.3 265.2,265.0 187.9,265.0 183.4,220.8 179.0,187.7 176.8,176.7 163.5,88.3" fill="#ffc400"/>
<polygon points="346.2,88.9 349.8,73.2 363.1,61.2 375.1,68.3 384.8,99.8 392.1,160.1 394.5,265.0 352.7,265.0 352.7,88.9" fill="#ffc400"/>
<polygon points="11.1,0.0 11.1,1.2 19.6,4.2 31.6,3.0 36.4,0.0" fill="#fff500"/>
<polygon points="198.6,0.0 210.0,6.6 232.1,8.8 254.2,5.5 270.7,2.8 276.2,0.0" fill="#fff500"/>
<polygon points="0.0,145.0 5.1,153.5 12.4,177.9 16.0,195.0 22.2,217.0 25.9,236.4 30.7,265.0 0.0,265.0" fill="#fff500"/>
<polygon points="55.7,88.3 62.9,74.1 70.2,50.0 77.4,34.3 89.4,25.9 99.0,23.5 109.9,27.2 118.3,34.3 125.2,43.9 135.4,64.0 158.7,85.1 163.4,88.6" fill="#fff500"/>
<polygon points="55.1,176.7 57.7,187.6 66.2,212.0 74.7,230.3 83.3,248.7 90.6,265.0 183.4,265.0 180.1,220.8 176.8,187.7 174.6,176.7" fill="#fff500"/>
<polygon points="266.5,88.9 268.8,70.8 283.4,39.4 293.0,22.4 307.5,17.7 319.6,22.4 329.3,39.4 342.6,88.9" fill="#fff500"/>
<polygon points="360.7,0.0 384.8,7.9 409.0,22.4 421.0,44.2 424.7,75.6 423.4,160.1 422.1,265.0 442.0,265.0 442.0,21.3 434.3,17.7 428.3,0.0" fill="#fff500"/>
<polygon points="257.5,265.0 260.8,242.9 265.2,231.9 265.2,265.0" fill="#fff500"/>
<polygon points="61.1,88.3 99.0,41.0 121.3,64.0 144.8,85.0 154.1,88.3" fill="#cddc00"/>
<polygon points="65.0,176.7 71.1,185.2 80.8,202.3 88.2,224.3 96.7,246.2 96.7,265.0 171.6,265.0 168.2,176.7" fill="#cddc00"/>
<polygon points="272.5,88.9 308.7,37.0 337.7,88.9" fill="#cddc00"/>
<polygon points="0.0,230.3 3.9,238.9 8.8,248.7 14.9,255.9 22.2,265.0 0.0,265.0" fill="#cddc00"/>
<polygon points="23.1,135.6 23.1,101.8 31.6,82.6 38.8,78.9 46.1,78.9 50.8,85.0 52.0,88.3 52.7,177.9 50.3,192.6 43.0,207.1 32.0,181.5 29.5,151.0" fill="#ffa800"/>
<polygon points="32.0,265.0 35.7,255.9 44.2,236.4 53.9,229.1 63.8,236.4 74.7,243.8 84.5,252.3 87.0,265.0" fill="#ffa800"/>
<polygon points="160.0,88.6 161.1,64.0 171.1,47.5 186.5,52.1 202.0,64.5 214.3,82.9 222.0,101.5 232.8,123.0 245.2,141.6 257.5,152.4 265.2,157.0 265.2,265.0 200.9,265.0 196.2,230.4 189.2,195.3 179.9,181.2 176.8,176.0" fill="#ffa800"/>
<polygon points="352.7,88.9 355.8,82.8 365.5,97.2 365.5,182.2 360.2,242.9 352.7,265.0" fill="#ffa800"/>
<polygon points="352.7,248.4 359.1,246.2 370.2,250.6 371.3,265.0 352.7,265.0" fill="#ffa800"/>
<polygon points="251.9,265.0 255.3,240.7 260.8,223.0 265.2,218.6 265.2,265.0" fill="#ffc400"/>
<polygon points="257.5,265.0 259.7,242.9 263.0,229.7 265.2,227.5 265.2,265.0" fill="#ffdc00"/>
<polygon points="260.8,265.0 262.4,246.2 265.2,236.3 265.2,265.0" fill="#fff500"/>
<polygon points="44.2,83.8 38.8,85.0 36.4,92.2 37.6,101.6 41.2,106.7 44.2,108.2" fill="#ff7f00"/>
<polygon points="44.2,133.9 34.5,142.5 29.5,155.9 32.0,180.3 38.1,187.6 44.2,188.8 49.1,184.0 51.5,177.9 44.2,176.7" fill="#ff7f00"/>
<polygon points="41.8,265.0 50.3,255.9 63.8,249.9 74.7,254.7 78.3,265.0" fill="#ff7f00"/>
<polygon points="165.9,88.6 167.0,71.0 171.1,62.9 177.2,63.7 191.2,73.6 203.5,92.2 206.6,113.7 202.0,136.9 186.5,149.3 176.8,153.9" fill="#ff7f00"/>
<polygon points="205.5,265.0 210.3,221.1 219.6,207.0 231.3,202.3 243.0,207.0 252.4,221.1 257.0,265.0" fill="#ff7f00"/>
<polygon points="352.7,88.9 354.7,86.1 358.0,95.0 355.8,102.7 352.7,104.9" fill="#ff7f00"/>
<polygon points="53.9,265.0 63.8,260.8 69.8,265.0" fill="#ff5500"/>
<polygon points="168.2,88.6 170.5,73.4 177.2,72.1 188.1,78.3 194.3,92.2 195.8,110.7 191.2,126.1 176.8,133.8" fill="#ff5500"/>
<polygon points="210.3,265.0 214.9,237.5 224.3,228.1 233.6,225.8 245.3,232.8 250.1,265.0" fill="#ff5500"/>
<polygon points="44.2,155.9 36.9,159.6 34.5,173.0 39.3,182.7 44.2,185.2 49.1,180.3 44.2,176.7" fill="#ff2a00"/>
<polygon points="171.3,88.6 172.4,80.6 177.2,78.3 185.0,86.0 188.1,101.5 185.0,113.7 176.8,116.8" fill="#ff2a00"/>
<polygon points="217.2,265.0 219.6,249.2 229.0,239.8 240.7,244.5 245.3,265.0" fill="#ff2a00"/>
<polygon points="44.2,163.4 39.8,167.8 39.8,177.8 44.2,181.1" fill="#ee0000"/>
<polygon points="173.5,88.3 176.8,83.9 180.3,89.1 185.0,98.4 183.4,107.7 176.8,110.7" fill="#ee0000"/>
<polygon points="224.3,265.0 229.0,253.8 238.3,253.8 241.8,265.0" fill="#ee0000"/>
<polygon points="176.8,89.4 180.1,93.9 179.6,101.6 176.8,103.8" fill="#cc0000"/>
<path d="M11.05 0V265M22.10 0V265M33.15 0V265M44.20 0V265M55.25 0V265M66.30 0V265M77.35 0V265M88.40 0V265M99.45 0V265M110.50 0V265M121.55 0V265M132.60 0V265M143.65 0V265M154.70 0V265M165.75 0V265M176.80 0V265M187.85 0V265M198.90 0V265M209.95 0V265M221.00 0V265M232.05 0V265M243.10 0V265M254.15 0V265M265.20 0V265M276.25 0V265M287.30 0V265M298.35 0V265M309.40 0V265M320.45 0V265M331.50 0V265M342.55 0V265M353.60 0V265M364.65 0V265M375.70 0V265M386.75 0V265M397.80 0V265M408.85 0V265M419.90 0V265M430.95 0V265M0 11.04H442M0 22.08H442M0 33.12H442M0 44.17H442M0 55.21H442M0 66.25H442M0 77.29H442M0 88.33H442M0 99.38H442M0 110.42H442M0 121.46H442M0 132.50H442M0 143.54H442M0 154.58H442M0 165.62H442M0 176.67H442M0 187.71H442M0 198.75H442M0 209.79H442M0 220.83H442M0 231.88H442M0 242.92H442M0 253.96H442" stroke="rgba(110,110,110,0.6)" stroke-width="0.8" fill="none"/>
<rect x="44.20" y="88.33" width="132.60" height="88.33" fill="#fff" stroke="#3c3c3c" stroke-width="1.5"/>
<rect x="265.20" y="88.33" width="88.40" height="179.67" fill="#fff"/>
<path d="M0 0H442V265H353.60V88.33H265.20V265H0Z" fill="none" stroke="#3c3c3c" stroke-width="1.5"/>
</svg>
<div class="abs" style="left:1630px;top:839px;width:37px;height:14px;background:#fff"></div><div class="t" style="left:1631px;top:839px;font-size:11px;font-weight:bold;line-height:14px;color:#000">22.9 %</div><div class="abs" style="left:1627px;top:850px;width:6px;height:6px;border-radius:50%;background:#000"></div>
<div class="abs" style="left:1465px;top:1004px;width:31px;height:13px;background:#fff"></div><div class="t" style="left:1466px;top:1004px;font-size:11px;font-weight:bold;line-height:13px;color:#000">0.0 %</div><div class="abs" style="left:1462px;top:1014px;width:6px;height:6px;border-radius:50%;background:#000"></div>
<div class="abs dark" style="left:0;top:1128px;width:1920px;height:32px"></div>
<div class="t" style="left:18px;top:1139px;font-size:11.2px;line-height:14px;color:#8a8a8a;font-weight:bold">Design Code: <span style="color:#fff">EN</span></div>
<div class="t" style="left:138px;top:1139px;font-size:11.6px;line-height:14px;color:#8a8a8a;font-weight:bold">Rounding: <span style="color:#fff">Metric</span></div>
<div class="t" style="left:264px;top:1139px;font-size:11.7px;line-height:14px;color:#8a8a8a;font-weight:bold">Presentation Units: <span style="color:#fff">Metric</span></div>
<div class="t" style="left:1793px;top:1138px;font-size:12px;line-height:14px;color:#f26f21;top:1139px">www.<span style="color:#fff">ideastatica</span> .com</div>
</body></html>
